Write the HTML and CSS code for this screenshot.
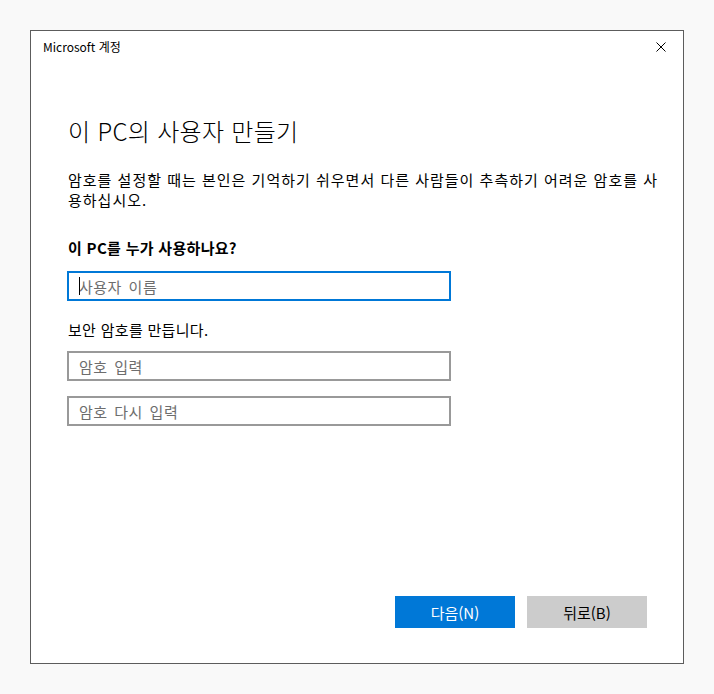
FILE: index.html
```html
<!DOCTYPE html>
<html lang="ko">
<head>
    <meta charset="utf-8">
    <title>Microsoft 계정</title>
    <link rel="stylesheet" href="styles.css">
</head>
<body>
    <div class="window">
        <div class="title-bar">
            <span class="title">Microsoft 계정</span>
            <button class="close-btn" aria-label="닫기">
                <svg width="10" height="10" viewBox="0 0 10 10">
                    <path d="M0.5 0.5 L9.5 9.5 M9.5 0.5 L0.5 9.5" stroke="#000" stroke-width="1" fill="none"/>
                </svg>
            </button>
        </div>

        <div class="content">
            <h1>이 PC의 사용자 만들기</h1>
            <p class="intro">암호를 설정할 때는 본인은 기억하기 쉬우면서 다른 사람들이 추측하기 어려운 암호를 사용하십시오.</p>

            <p class="label strong">이 PC를 누가 사용하나요?</p>
            <div class="field focused">
                <input type="text" placeholder="사용자 이름">
                <span class="caret"></span>
            </div>

            <p class="label second">보안 암호를 만듭니다.</p>
            <div class="field">
                <input type="password" placeholder="암호 입력">
            </div>
            <div class="field last">
                <input type="password" placeholder="암호 다시 입력">
            </div>
        </div>

        <div class="footer">
            <button class="btn primary">다음(N)</button>
            <button class="btn secondary">뒤로(B)</button>
        </div>
    </div>
</body>
</html>
```

FILE: styles.css
```css
body {
    margin: 0;
    padding: 30px;
    background-color: #f9f9f9;
    font-family: "Noto Sans CJK KR", "Noto Sans", sans-serif;
    color: #000;
}

.window {
    width: 654px;
    height: 634px;
    box-sizing: border-box;
    border: 1px solid #5c5c5c;
    background-color: white;
    display: flex;
    flex-direction: column;
}

.title-bar {
    height: 32px;
    display: flex;
    align-items: center;
    justify-content: space-between;
    padding: 0 16px 0 12px;
}

.title {
    font-size: 12px;
    line-height: 16px;
}

.close-btn {
    border: none;
    background: none;
    padding: 0;
    width: 12px;
    height: 12px;
    display: flex;
    align-items: center;
    justify-content: center;
}

.content {
    flex: 1;
    padding: 52px 0 0 36px;
}

h1 {
    margin: 0 0 0 1px;
    font-size: 24px;
    line-height: 32px;
    font-weight: 300;
    letter-spacing: 0.3px;
}

p {
    margin: 0;
    font-size: 15px;
    line-height: 20px;
}

.intro {
    margin-top: 23px;
    margin-left: 1px;
    width: 595px;
    letter-spacing: 1px;
}

.label {
    margin: 28px 0 13px 1px;
    letter-spacing: 0.3px;
}

.label.strong {
    font-weight: bold;
}

.label.second {
    margin-top: 19px;
    margin-bottom: 11px;
}

.field {
    position: relative;
    width: 384px;
    margin-bottom: 15px;
}

.field input {
    width: 384px;
    height: 30px;
    box-sizing: border-box;
    border: 2px solid #999;
    padding: 0 10px;
    font-family: inherit;
    font-size: 15px;
    letter-spacing: 0.5px;
    word-spacing: 2px;
    outline: none;
}

.field input::placeholder {
    color: #6d6d6d;
}

.field.focused input {
    border-color: #0078d7;
}

.caret {
    position: absolute;
    left: 12px;
    top: 6px;
    width: 1px;
    height: 18px;
    background-color: #000;
}

.footer {
    display: flex;
    justify-content: flex-end;
    gap: 12px;
    padding: 0 36px 35px 0;
}

.btn {
    width: 120px;
    height: 32px;
    border: none;
    font-family: inherit;
    font-size: 15px;
}

.btn.primary {
    background-color: #0078d7;
    color: white;
}

.btn.secondary {
    background-color: #cccccc;
    color: #000;
}
```
